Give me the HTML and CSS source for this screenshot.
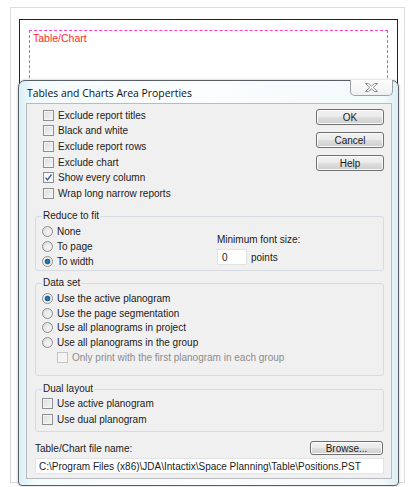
FILE: index.html
```html
<!DOCTYPE html>
<html>
<head>
<meta charset="utf-8">
<link rel="stylesheet" href="styles.css">
</head>
<body>
<div class="sheet">
  <div class="page">
    <div class="area"><span class="area-label">Table/Chart</span></div>
  </div>

  <div class="dialog">
    <div class="titlebar">
      <span class="title">Tables and Charts Area Properties</span>
      <div class="close">
        <svg width="15" height="11" viewBox="0 0 15 11"><path d="M1.5 1.5h3l3 2.6 3-2.6h3l-4.3 4 4.3 4h-3l-3-2.6-3 2.6h-3l4.3-4z" fill="#fff" stroke="#8a8a8a" stroke-width="1" stroke-linejoin="round"/></svg>
      </div>
    </div>
    <div class="body">
      <div class="top">
        <div class="opts">
          <div class="row"><span class="cb"></span>Exclude report titles</div>
          <div class="row"><span class="cb"></span>Black and white</div>
          <div class="row"><span class="cb"></span>Exclude report rows</div>
          <div class="row"><span class="cb"></span>Exclude chart</div>
          <div class="row"><span class="cb checked"><svg width="9" height="9" viewBox="0 0 9 9"><path d="M1.5 4.6l2 2.2 4-5.3" fill="none" stroke="#3b5ba5" stroke-width="1.4"/></svg></span>Show every column</div>
          <div class="row"><span class="cb"></span>Wrap long narrow reports</div>
        </div>
        <div class="buttons">
          <div class="btn">OK</div>
          <div class="btn">Cancel</div>
          <div class="btn">Help</div>
        </div>
      </div>

      <fieldset class="group reduce">
        <legend>Reduce to fit</legend>
        <div class="reduce-grid">
          <div class="reduce-opts">
            <div class="row r15"><span class="rb"></span>None</div>
            <div class="row r15"><span class="rb"></span>To page</div>
            <div class="row r15"><span class="rb on"></span>To width</div>
          </div>
          <div class="minfont">
            <div class="minlabel">Minimum font size:</div>
            <div class="minrow"><span class="numbox">0</span><span>points</span></div>
          </div>
        </div>
      </fieldset>

      <fieldset class="group dataset">
        <legend>Data set</legend>
        <div class="group-rows">
          <div class="row r14"><span class="rb on"></span>Use the active planogram</div>
          <div class="row r14"><span class="rb"></span>Use the page segmentation</div>
          <div class="row r14"><span class="rb"></span>Use all planograms in project</div>
          <div class="row r14"><span class="rb"></span>Use all planograms in the group</div>
          <div class="row r14 sub disabled"><span class="cb dis"></span>Only print with the first planogram in each group</div>
        </div>
      </fieldset>

      <fieldset class="group dual">
        <legend>Dual layout</legend>
        <div class="row r16"><span class="cb"></span>Use active planogram</div>
        <div class="row r16"><span class="cb"></span>Use dual planogram</div>
      </fieldset>

      <div class="filerow">
        <span class="filelabel">Table/Chart file name:</span>
        <div class="btn browse">Browse...</div>
      </div>
      <div class="filebox">C:\Program Files (x86)\JDA\Intactix\Space Planning\Table\Positions.PST</div>
    </div>
  </div>
</div>
</body>
</html>
```

FILE: styles.css
```css
* { box-sizing: border-box; }
html, body { margin: 0; padding: 0; background: #fff; }
body {
  width: 409px;
  height: 487px;
  overflow: hidden;
  font-family: "Liberation Sans", Arial, sans-serif;
  font-size: 10px;
  color: #1b1b1b;
}
.sheet {
  position: relative;
  margin: 7px 0 0 10px;
  width: 395px;
  height: 476px;
  border: 1px solid #dcdcdc;
}
.page {
  margin: 11px 0 0 8px;
  width: 379px;
  height: 440px;
  border: 1px solid #222;
  padding: 10px 9px 0 9px;
}
.area {
  height: 400px;
  border: 1px dashed #ff3fc8;
  padding: 1px 3px;
}
.area-label {
  color: #ff2a2a;
  font-size: 10.5px;
}

.dialog {
  position: absolute;
  left: 7px;
  top: 72px;
  width: 381px;
  height: 406px;
  border: 1px solid #5a5f66;
  border-radius: 7px 7px 4px 4px;
  background: linear-gradient(90deg, #d8f0f6 0%, #f4fbfd 4%, #fbfdfe 50%, #f3f9fb 96%, #dbeef4 100%);
  box-shadow: 0 0 3px rgba(0,0,0,0.25);
  padding: 0 6px 6px 7px;
  display: flex;
  flex-direction: column;
}
.titlebar {
  position: relative;
  flex: none;
  height: 22px;
  display: flex;
  align-items: center;
}
.title {
  font-family: "Open Sans", "Noto Sans", sans-serif;
  font-size: 10.4px;
  color: #111;
  padding-left: 1px;
  padding-top: 1px;
}
.close {
  position: absolute;
  right: -1px;
  top: -1px;
  width: 43px;
  height: 16px;
  border: 1px solid #9aa0a6;
  border-top: none;
  border-radius: 0 0 5px 5px;
  background: linear-gradient(#fdfdfd, #eef1f3);
  display: flex;
  align-items: center;
  justify-content: center;
}
.body {
  flex: 1;
  min-height: 0;
  background: #f0f0f0;
  border: 1px solid #b8bcc0;
  padding: 0 7px 0 8px;
}

.top {
  display: flex;
  justify-content: space-between;
  height: 105px;
}
.opts { padding: 3.6px 0 0 8px; }
.row {
  display: flex;
  align-items: center;
  height: 15.6px;
  white-space: nowrap;
}
.r15 { height: 15px; }
.r14 { height: 14.75px; }
.r16 { height: 15.8px; }

.cb {
  flex: none;
  width: 11px;
  height: 11px;
  margin-right: 4px;
  border: 1px solid #8f8f8f;
  background: linear-gradient(135deg, #dcdcdc, #f6f6f6);
  box-shadow: inset 0 0 0 1px #f4f4f4;
  display: flex;
  align-items: center;
  justify-content: center;
}
.cb.checked { background: #fbfbfb; }
.cb.dis { border-color: #c4c4c4; background: #f4f4f4; box-shadow: none; }

.rb {
  flex: none;
  width: 11px;
  height: 11px;
  margin-right: 4px;
  border-radius: 50%;
  border: 1px solid #8f8f8f;
  background: radial-gradient(circle at 60% 60%, #f8f8f8, #d6d6d6);
}
.rb.on {
  background: radial-gradient(circle, #2b7fb8 0, #1f5f95 2.5px, #eaeaea 3.2px, #f6f6f6 5px);
}

.buttons {
  padding-top: 5px;
  display: flex;
  flex-direction: column;
  gap: 7px;
}
.btn {
  width: 68px;
  height: 16px;
  border: 1px solid #707070;
  border-radius: 3px;
  background: linear-gradient(#f2f2f2 0%, #ebebeb 45%, #dddddd 55%, #cfcfcf 100%);
  box-shadow: inset 0 0 0 1px #fbfbfb;
  display: flex;
  align-items: center;
  justify-content: center;
  font-size: 10px;
}

.group {
  margin: 0;
  padding: 0 0 0 6px;
  border: 1px solid #d5dbe0;
  border-radius: 3px;
  min-width: 0;
}
.group legend {
  padding: 0 1px;
  margin-left: 0;
  line-height: 14px;
  height: 14px;
}
.reduce { height: 62px; }
.reduce-grid {
  display: grid;
  grid-template-columns: 175px 1fr;
  padding-top: 1px;
}
.minlabel { margin-top: 9px; line-height: 14px; }
.minrow {
  display: flex;
  align-items: center;
  gap: 4px;
  margin-top: 2px;
}
.numbox {
  width: 30px;
  height: 16px;
  background: #fff;
  border: 1px solid #e2e3e5;
  padding-left: 4px;
  display: flex;
  align-items: center;
}

.dataset {
  margin-top: 5px;
  height: 100px;
}
.group-rows { padding-top: 1px; }
.sub { padding-left: 15px; }
.disabled { color: #8c8c8c; }

.dual {
  margin-top: 6px;
  height: 50px;
}

.filerow {
  display: flex;
  justify-content: space-between;
  align-items: flex-end;
  margin-top: 9px;
  height: 14px;
}
.filelabel { line-height: 12px; }
.btn.browse { width: 73px; height: 14px; margin-right: 1px; }
.filebox {
  margin-top: 3px;
  height: 16px;
  background: #fff;
  border: 1px solid #e2e3e5;
  padding-left: 3px;
  display: flex;
  align-items: center;
  white-space: nowrap;
  overflow: hidden;
}
```
